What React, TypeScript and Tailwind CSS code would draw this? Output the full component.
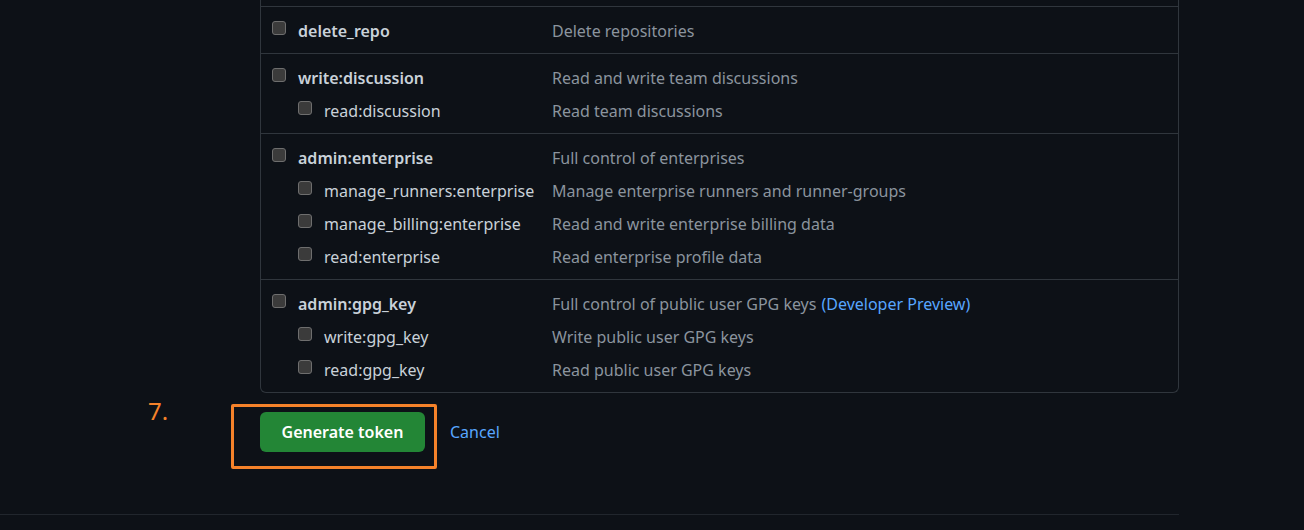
import React from "react";

type Scope = { name: string; desc: string; sub?: boolean; preview?: boolean };

const sections: Scope[][] = [
  [{ name: "delete_repo", desc: "Delete repositories" }],
  [
    { name: "write:discussion", desc: "Read and write team discussions" },
    { name: "read:discussion", desc: "Read team discussions", sub: true },
  ],
  [
    { name: "admin:enterprise", desc: "Full control of enterprises" },
    { name: "manage_runners:enterprise", desc: "Manage enterprise runners and runner-groups", sub: true },
    { name: "manage_billing:enterprise", desc: "Read and write enterprise billing data", sub: true },
    { name: "read:enterprise", desc: "Read enterprise profile data", sub: true },
  ],
  [
    { name: "admin:gpg_key", desc: "Full control of public user GPG keys", preview: true },
    { name: "write:gpg_key", desc: "Write public user GPG keys", sub: true },
    { name: "read:gpg_key", desc: "Read public user GPG keys", sub: true },
  ],
];

function Checkbox() {
  return (
    <span className="mt-[8px] block h-[14px] w-[14px] shrink-0 rounded-[3px] border border-[#6e6e6e] bg-[#3b3b3b]" />
  );
}

function ScopeRow({ scope }: { scope: Scope }) {
  return (
    <div className="flex h-[33px] items-start">
      <div className={`flex w-[280px] shrink-0 items-start gap-3 ${scope.sub ? "pl-[26px]" : ""}`}>
        <Checkbox />
        <span
          className={`mt-[3px] leading-[30px] ${scope.sub ? "font-normal text-[#c9d1d9]" : "font-semibold text-[#c9d1d9]"}`}
        >
          {scope.name}
        </span>
      </div>
      <span className="mt-[3px] leading-[30px] text-[#8b949e]">
        {scope.desc}
        {scope.preview && <a className="ml-[5px] text-[#58a6ff]">(Developer Preview)</a>}
      </span>
    </div>
  );
}

export default function App() {
  return (
    <div
      className="h-[530px] w-full overflow-hidden bg-[#0d1117] text-[16px]"
      style={{ fontFamily: '"Noto Sans", "Liberation Sans", sans-serif' }}
    >
      <div className="w-[1179px] border-b border-[#21262d] pb-[62px]">
        <div className="ml-[260px] w-[919px]">
          {/* scope list */}
          <div className="rounded-b-md border-x border-b border-[#30363d]">
            <div className="h-[6px]" />
            {sections.map((group, i) => (
              <div key={i} className="border-t border-[#30363d] pb-[7px] pl-[11px] pt-[6px]">
                {group.map((s) => (
                  <ScopeRow key={s.name} scope={s} />
                ))}
              </div>
            ))}
          </div>

          {/* actions */}
          <div className="relative mt-[19px] flex items-center gap-[25px]">
            <span className="absolute left-[-112px] top-[-16px] text-[24px] leading-[30px] text-[#f5822a]">
              7.
            </span>
            <span className="pointer-events-none absolute left-[-29px] top-[-8px] h-[65px] w-[206px] rounded-[2px] border-[3px] border-[#f5822a]" />
            <button className="h-[40px] w-[165px] rounded-md bg-[#238636] font-semibold text-white">
              Generate token
            </button>
            <a className="text-[#58a6ff]">Cancel</a>
          </div>
        </div>
      </div>
    </div>
  );
}
